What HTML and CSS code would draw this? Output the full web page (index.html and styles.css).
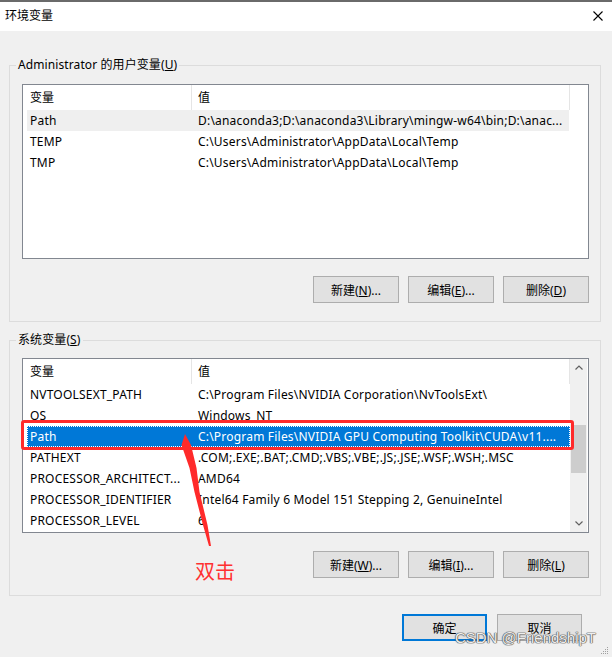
FILE: index.html
```html
<!DOCTYPE html>
<html lang="zh-CN">
<head>
<meta charset="utf-8">
<title>环境变量</title>
<link rel="stylesheet" href="styles.css">
</head>
<body>
<div class="window">
  <header class="titlebar">
    <span class="title">环境变量</span>
    <svg class="close" viewBox="0 0 10 10"><path d="M0.5 0.5 L9.5 9.5 M9.5 0.5 L0.5 9.5" stroke="#000" stroke-width="1.1" fill="none"/></svg>
  </header>

  <fieldset class="group group-user">
    <legend>Administrator 的用户变量(<u>U</u>)</legend>
    <div class="group-body">
      <div class="listview">
        <div class="lv-main">
          <div class="lv-header">
            <div class="hcell hcell-name">变量</div>
            <div class="hcell hcell-value">值</div>
          </div>
          <div class="lv-row sel-inactive"><div class="cell-name">Path</div><div class="cell-value">D:\anaconda3;D:\anaconda3\Library\mingw-w64\bin;D:\anac...</div></div>
          <div class="lv-row"><div class="cell-name">TEMP</div><div class="cell-value">C:\Users\Administrator\AppData\Local\Temp</div></div>
          <div class="lv-row"><div class="cell-name">TMP</div><div class="cell-value">C:\Users\Administrator\AppData\Local\Temp</div></div>
        </div>
      </div>
      <div class="btn-row">
        <button class="btn">新建(<u>N</u>)...</button>
        <button class="btn">编辑(<u>E</u>)...</button>
        <button class="btn">删除(<u>D</u>)</button>
      </div>
    </div>
  </fieldset>

  <fieldset class="group group-sys">
    <legend>系统变量(<u>S</u>)</legend>
    <div class="group-body">
      <div class="listview">
        <div class="lv-main">
          <div class="lv-header">
            <div class="hcell hcell-name">变量</div>
            <div class="hcell hcell-value">值</div>
          </div>
          <div class="lv-row"><div class="cell-name">NVTOOLSEXT_PATH</div><div class="cell-value">C:\Program Files\NVIDIA Corporation\NvToolsExt\</div></div>
          <div class="lv-row"><div class="cell-name">OS</div><div class="cell-value">Windows_NT</div></div>
          <div class="lv-row sel-active"><div class="cell-name">Path</div><div class="cell-value">C:\Program Files\NVIDIA GPU Computing Toolkit\CUDA\v11....</div></div>
          <div class="lv-row"><div class="cell-name">PATHEXT</div><div class="cell-value">.COM;.EXE;.BAT;.CMD;.VBS;.VBE;.JS;.JSE;.WSF;.WSH;.MSC</div></div>
          <div class="lv-row"><div class="cell-name">PROCESSOR_ARCHITECT...</div><div class="cell-value">AMD64</div></div>
          <div class="lv-row"><div class="cell-name">PROCESSOR_IDENTIFIER</div><div class="cell-value">Intel64 Family 6 Model 151 Stepping 2, GenuineIntel</div></div>
          <div class="lv-row"><div class="cell-name">PROCESSOR_LEVEL</div><div class="cell-value">6</div></div>
        </div>
        <div class="scrollbar">
          <div class="sb-btn"><svg width="8" height="5" viewBox="0 0 8 5"><path d="M0.5 4.5 L4 1 L7.5 4.5" stroke="#606060" stroke-width="1.2" fill="none"/></svg></div>
          <div class="sb-track"><div class="sb-thumb"></div></div>
          <div class="sb-btn"><svg width="8" height="5" viewBox="0 0 8 5"><path d="M0.5 0.5 L4 4 L7.5 0.5" stroke="#606060" stroke-width="1.2" fill="none"/></svg></div>
        </div>
      </div>
      <div class="btn-row">
        <button class="btn">新建(<u>W</u>)...</button>
        <button class="btn">编辑(<u>I</u>)...</button>
        <button class="btn">删除(<u>L</u>)</button>
      </div>
    </div>
  </fieldset>

  <div class="dialog-buttons">
    <button class="btn btn-dialog btn-default">确定</button>
    <button class="btn btn-dialog">取消</button>
  </div>

  <div class="annot-box"></div>
  <svg class="annot-arrow" viewBox="0 0 40 120"><polygon points="10,4 16,15 21.5,38 24.5,62 32.5,95 36,116 34,116 28,95 19.5,62 14.5,38 6.5,15" fill="#ff2a2a"/></svg>
  <div class="annot-label">双击</div>
  <div class="watermark">CSDN @FriendshipT</div>
  <svg class="grip" viewBox="0 0 8 8"><g fill="#a0a0a0"><rect x="6" y="0" width="1" height="1"/><rect x="4" y="2" width="1" height="1"/><rect x="6" y="2" width="1" height="1"/><rect x="2" y="4" width="1" height="1"/><rect x="4" y="4" width="1" height="1"/><rect x="6" y="4" width="1" height="1"/><rect x="0" y="6" width="1" height="1"/><rect x="2" y="6" width="1" height="1"/><rect x="4" y="6" width="1" height="1"/><rect x="6" y="6" width="1" height="1"/></g></svg>
</div>
</body>
</html>
```

FILE: styles.css
```css
* { box-sizing: border-box; }
html, body { margin: 0; padding: 0; }
body {
  background: #f0f0f0;
  font-family: "Noto Sans", "Noto Sans CJK SC", sans-serif;
  font-size: 12px;
  color: #000;
}
.window {
  position: relative;
  width: 612px;
  height: 657px;
  overflow: hidden;
  background: #f0f0f0;
}
.titlebar {
  height: 31px;
  background: #fff;
  border-top: 2px solid #6a6a6a;
  display: flex;
  align-items: center;
  justify-content: space-between;
  padding: 0 9px 2px 5px;
}
.title { line-height: 16px; }
.close { width: 10px; height: 10px; display: block; }

.group {
  margin: 26px 0 0 9px;
  width: 592px;
  border: 1px solid #dcdcdc;
  padding: 0;
  min-width: 0;
}
.group legend {
  margin-left: 6px;
  padding: 0 2px;
  line-height: 16px;
  letter-spacing: 0.1px;
}
.group-body { padding: 11px 11px 18px 12px; }
.group-sys { margin-top: 10px; }
.group-sys .group-body { padding-top: 10px; padding-bottom: 17px; }
.group-sys .btn-row { margin-top: 18px; }

.listview {
  width: 567px;
  height: 175px;
  border: 1px solid #828790;
  background: #fff;
  display: flex;
  overflow: hidden;
}
.lv-main { width: 547px; flex: none; }
.lv-header { display: flex; height: 25px; }
.hcell {
  border-right: 1px solid #e5e5e5;
  line-height: 25px;
  white-space: nowrap;
}
.hcell-name { width: 169px; padding-left: 7px; }
.hcell-value { width: 378px; padding-left: 6px; }

.lv-row {
  display: flex;
  height: 21px;
  line-height: 21px;
  margin-left: 4px;
  width: 543px;
  letter-spacing: 0.2px;
}
.cell-name { width: 165px; flex: none; padding-left: 3px; white-space: nowrap; overflow: hidden; }
.cell-value { flex: 1; padding-left: 6px; white-space: nowrap; overflow: hidden; }
.sel-inactive { background: #efefef; width: 542px; }
.sel-active {
  background: #0078d7;
  color: #fff;
  outline: 1px dotted #fff;
  outline-offset: -1px;
}

.scrollbar {
  width: 17px;
  flex: none;
  display: flex;
  flex-direction: column;
  background: #f0f0f0;
}
.sb-btn {
  height: 17px;
  display: flex;
  align-items: center;
  justify-content: center;
}
.sb-btn svg { display: block; }
.sb-track { flex: 1; padding: 0 1px; }
.sb-thumb { margin-top: 49px; height: 48px; background: #cdcdcd; }

.btn-row {
  display: flex;
  justify-content: flex-end;
  gap: 9px;
  margin-top: 17px;
}
.btn {
  width: 86px;
  height: 27px;
  padding: 0;
  background: #e1e1e1;
  border: 1px solid #adadad;
  font: inherit;
  color: #000;
}
.dialog-buttons {
  display: flex;
  justify-content: flex-end;
  gap: 10px;
  margin: 18px 30px 0 0;
}
.btn-dialog { width: 85px; }
.btn-default { border: 2px solid #0078d7; }

.annot-box {
  position: absolute;
  left: 21px;
  top: 420px;
  width: 553px;
  height: 30px;
  border: 3px solid #ff2a2a;
  border-radius: 3px;
}
.annot-arrow {
  position: absolute;
  left: 175px;
  top: 430px;
  width: 40px;
  height: 120px;
}
.annot-label {
  position: absolute;
  left: 195px;
  top: 559px;
  font-family: "Noto Sans CJK SC", sans-serif;
  font-size: 20px;
  line-height: 24px;
  color: #ff3030;
}
.watermark {
  position: absolute;
  right: 16px;
  top: 629px;
  font-family: "Liberation Sans", sans-serif;
  font-size: 15px;
  line-height: 18px;
  color: rgba(255, 255, 255, 0.92);
  text-shadow: 0 0 1px #555, 0 0 1px #555, 0 0 1px #555, 0 0 1px #555;
  white-space: nowrap;
}
.grip {
  position: absolute;
  right: 3px;
  bottom: 2px;
  width: 8px;
  height: 8px;
}
```
